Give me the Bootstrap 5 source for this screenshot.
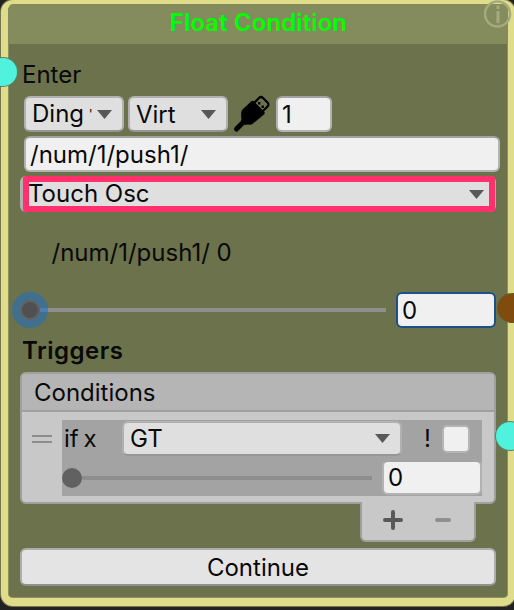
<!DOCTYPE html>
<html lang="en">
<head>
<meta charset="utf-8">
<meta name="viewport" content="width=device-width, initial-scale=1">
<title>Float Condition</title>
<link href="https://cdn.jsdelivr.net/npm/bootstrap@5.3.0/dist/css/bootstrap.min.css" rel="stylesheet">
<style>
body{background:#222;font-family:Inter,"Liberation Sans",sans-serif;font-size:24px;line-height:28px;color:#090909;width:514px;height:610px;overflow:hidden}
.node{width:514px;height:606px;margin-left:1px;background:#6b724c;border:solid #dfdd89;border-width:4px 7px 8px 7px;border-radius:12px;box-shadow:inset 0 0 0 1px #8d9162,0 0 0 1px #77774f}
.node-title{height:40px;background:#848c5d;color:#0f0;font-weight:600;letter-spacing:.1px;padding-left:1px;line-height:37px;border-radius:6px 6px 0 0}
.node-body{padding:17px 12px 0}
.field{background:#f0f0f0;border:2px solid #b3b3b3;border-top-color:#a2a2a2;border-radius:6px;height:36px;line-height:33px;padding:0 4px;white-space:nowrap}
.picker{background:#dfdfdf;border-color:#b1b1b1;border-bottom-color:#969696;padding:0 10px 0 6px}
.picker svg{flex:none;width:15px;height:9px;fill:#585858}
.w-pick{width:100px}
.w-num{width:56px}
.device{width:60px;word-spacing:-2px}
.device small{font-size:13px;vertical-align:3px}
.target{height:36px;background:#b1b1b1;border-radius:6px;padding:0 1px 0 3px}
.target>div{height:36px;border:6px solid #ff306c;border-radius:3px;background:#dfdfdf;line-height:24px;padding-right:5px}
.target span{margin-left:-1px}
.target svg{width:15px;height:9px;fill:#585858}
.focused{border:2px solid #1d5087}
.track{height:4px;background:#8e8e8e}
.knob{width:20px;height:20px;border-radius:50%;background:#616161;flex:none}
.knob-focus{background:#505050;border:2px solid #626262;box-shadow:0 0 0 8px #40708d}
.track-focus{background:linear-gradient(90deg,#4b7dad 8px,#8e8e8e 8px)}
.triggers{letter-spacing:.5px;margin:9px 0 0 2px}
.conds{height:132px;background:#c8c8c8;border:2px solid #a0a0a0;border-radius:6px}
.conds-head{height:38px;background:#b5b5b5;border-bottom:2px solid #a0a0a0;padding-left:12px;line-height:37px;border-radius:4px 4px 0 0}
.cond{width:420px;height:76px;background:#a3a3a3}
.cond .field{height:35px;line-height:32px}
.grip{width:20px;height:8px;border:solid #8d8d8d;border-width:2px 0;margin:15px 10px 0 10px}
.tick{width:28px;height:28px;background:#f0f0f0;border:2px solid #b5b5b5;border-radius:5px}
.foot{width:116px;height:40px;margin:-2px 20px 0 auto;background:#c8c8c8;border:2px solid #a0a0a0;border-top:0;border-radius:0 0 6px 6px;position:relative}
.go{height:38px;background:#e4e4e4;border:2px solid #adadad;border-bottom-color:#919191;border-radius:6px;line-height:35px;margin-top:6px;padding:0;font-size:24px;color:#090909}
.port{position:absolute;width:28px;height:28px;border-radius:50%;background:#50f2dd;box-shadow:0 0 0 1px #5a8068}
.port-in{left:-11px;top:58px}
.port-val{left:498px;top:294px;background:#824b0e;box-shadow:0 0 0 1px #675b2c}
.port-out{left:496px;top:422px}
.info{position:absolute;left:484px;top:0}
</style>
<script src="https://cdn.jsdelivr.net/npm/bootstrap@5.3.0/dist/js/bootstrap.bundle.min.js"></script>
</head>
<body class="position-relative">
<main class="node">
  <header class="node-title text-center">Float Condition</header>
  <div class="node-body">
    <div style="padding-left:2px">Enter</div>
    <div class="d-flex align-items-center" style="margin:7px 0 0 4px">
      <div class="field picker w-pick d-flex justify-content-between align-items-center"><span class="device">Ding <small>'</small></span><svg viewBox="0 0 15 9"><path d="M0 0h15L7.5 9z"/></svg></div>
      <div class="field picker w-pick d-flex justify-content-between align-items-center ms-1"><span>Virt</span><svg viewBox="0 0 15 9"><path d="M0 0h15L7.5 9z"/></svg></div>
      <svg class="ms-1 overflow-visible" width="40" height="36" viewBox="232 96 40 36" style="margin-right:4px">
        <path d="M236.500 129l8-8" stroke="#000" stroke-width="5" stroke-linecap="round"/>
        <path d="M253 104l6-6q2-2 4 0l4.500 4.500q2 2 0 4l-6 6z" fill="#6b724c" stroke="#000" stroke-width="2.200"/>
        <path d="M242 110l9-8.500q1.500-1.500 3 0l10 10q1.500 1.500 0 3l-11 9q-2 2-5 1l-3 .5-4-4 .5-2q-1-6 .5-9z"/>
        <path d="M258 102h2.400v2.400H258zM261.500 105.500h2.400v2.400h-2.400z"/>
      </svg>
      <div class="field w-num">1</div>
    </div>
    <div class="field mt-1 ms-1" style="width:476px">/num/1/push1/</div>
    <div class="target" style="margin-top:4px"><div class="d-flex justify-content-between align-items-center"><span>Touch Osc</span><svg viewBox="0 0 15 9"><path d="M0 0h15L7.500 9z"/></svg></div></div>
    <div style="margin:27px 0 0 31.500px">/num/1/push1/ 0</div>
    <div class="d-flex align-items-center" style="margin-top:25px">
      <div class="knob knob-focus"></div><div class="track track-focus flex-grow-1"></div>
      <div class="field focused w-pick" style="margin-left:10px">0</div>
    </div>
    <div class="fw-semibold triggers">Triggers</div>
    <section class="conds" style="margin-top:7px">
      <div class="conds-head">Conditions</div>
      <div class="d-flex" style="padding-top:8px">
        <div class="grip"></div>
        <div class="cond">
          <div class="d-flex align-items-center" style="height:37px;padding-left:2px;word-spacing:-2px">
            <span style="width:58px">if x</span>
            <div class="field picker d-flex justify-content-between align-items-center" style="width:280px"><span>GT</span><svg viewBox="0 0 15 9"><path d="M0 0h15L7.500 9z"/></svg></div>
            <span style="width:18px;margin-left:22px">!</span>
            <div class="tick"></div>
          </div>
          <div class="d-flex align-items-center" style="margin-top:3px">
            <div class="knob"></div><div class="track flex-grow-1"></div>
            <div class="field w-pick" style="margin-left:10px">0</div>
          </div>
        </div>
      </div>
    </section>
    <div class="foot"><svg class="d-block" width="112" height="38" viewBox="362 502 112 38"><path d="M385 520h16M393 512v16" stroke="#585858" stroke-width="4" stroke-linecap="round"/><path d="M437 520h12" stroke="#8f8f8f" stroke-width="4" stroke-linecap="round"/></svg></div>
    <button type="button" class="btn go d-block w-100">Continue</button>
  </div>
</main>
<i class="port port-in"></i><i class="port port-val"></i><i class="port port-out"></i>
<svg class="info" width="30" height="30" viewBox="484 0 30 30" fill="none" stroke="#a5aa7d"><circle cx="497.500" cy="14" r="12.500" stroke-width="2.500"/><path d="M498 11v12M498 5.500v3.500" stroke-width="3"/></svg>
</body>
</html>
